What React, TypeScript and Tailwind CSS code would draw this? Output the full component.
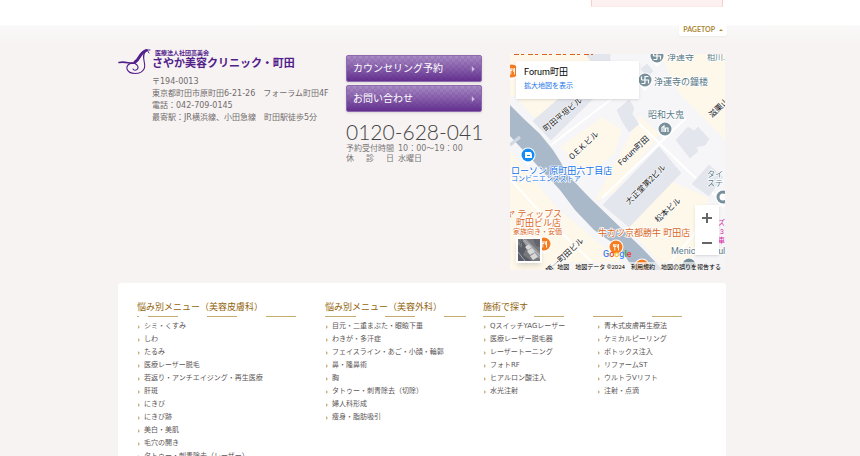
import React from 'react';

const dermatology = [
  'シミ・くすみ',
  'しわ',
  'たるみ',
  '医療レーザー脱毛',
  '若返り・アンチエイジング・再生医療',
  '肝斑',
  'にきび',
  'にきび跡',
  '美白・美肌',
  '毛穴の開き',
  'タトゥー・刺青除去（レーザー）',
];

const surgery = [
  '目元・二重まぶた・眼瞼下垂',
  'わきが・多汗症',
  'フェイスライン・あご・小顔・輪郭',
  '鼻・隆鼻術',
  '胸',
  'タトゥー・刺青除去（切除）',
  '婦人科形成',
  '痩身・脂肪吸引',
];

const treatmentsLeft = [
  'QスイッチYAGレーザー',
  '医療レーザー脱毛器',
  'レーザートーニング',
  'フォトRF',
  'ヒアルロン酸注入',
  '水光注射',
];

const treatmentsRight = [
  '青木式皮膚再生療法',
  'ケミカルピーリング',
  'ボトックス注入',
  'リファームST',
  'ウルトラVリフト',
  '注射・点滴',
];

const MenuList: React.FC<{ items: string[] }> = ({ items }) => (
  <ul className="pl-px text-[7px] leading-[13px] text-[#5c5656]">
    {items.map((item) => (
      <li key={item} className="flex items-center gap-1 whitespace-nowrap">
        <span className="h-0 w-0 border-y-[2px] border-l-[2px] border-y-transparent border-l-[#c9b583]" />
        <a href="#menu">{item}</a>
      </li>
    ))}
  </ul>
);

const MenuHeading: React.FC<{ title: string; dashes: string[] }> = ({ title, dashes }) => (
  <>
    <h2 className="text-[9px] leading-[18px] whitespace-nowrap text-[#93640c]">{title}</h2>
    <div className="mb-[3px] flex">
      {dashes.map((dash, i) => (
        <span key={i} className={`h-px shrink-0 bg-[#c4ab70] ${dash}`} />
      ))}
    </div>
  </>
);

const ContactButton: React.FC<{ label: string }> = ({ label }) => (
  <button
    type="button"
    className="relative flex h-[27px] w-full items-center justify-between overflow-hidden rounded-xs border border-[#8d69ad] bg-linear-to-b from-[#a98bc4] to-[#65308f] px-[6px] text-[10px] text-white shadow-sm"
  >
    <span className="absolute inset-0 bg-[repeating-conic-gradient(#4b1a7a_0_25%,transparent_0_50%)] bg-[length:6px_6px] opacity-10" />
    <span className="relative">{label}</span>
    <svg viewBox="0 0 5 6" className="relative h-[6px] w-[5px]">
      <path d="M0 3H3M2 0.5L4.5 3L2 5.5Z" fill="#d3bfe2" stroke="#d3bfe2" strokeWidth="0.3" />
    </svg>
  </button>
);

const LogoMark = () => (
  <svg viewBox="0 0 34 28" className="h-7 w-[34px] shrink-0" fill="none" stroke="#52208b" strokeLinecap="round">
    <path d="M1 14.500C8 13 11 16 16 15C22 13 21 5 29 2" strokeWidth="1.600" />
    <path d="M28 2.500C21 5 23 10 17 14" strokeWidth="2.800" />
    <path d="M28 3C22 8 29 16 26 21C23 27 11 27 9 21C8 16 15 13 19 17C22 21 17 24 15 21" strokeWidth="1.100" />
    <path d="M29 2L31 5M29 2L32 2" strokeWidth="1" />
  </svg>
);

const FoodPin: React.FC<{ x: number; y: number }> = ({ x, y }) => (
  <g transform={`translate(${x} ${y})`}>
    <path d="M0 10L-5 5H5Z" fill="#fff" />
    <circle r="7.500" fill="#fff" />
    <circle r="6.500" fill="#f57c20" />
    <path d="M-2.500 -3V-0.500H0V-3M-1.200 -3V3.500M2.500 3.500V-3C1.300 -2 1.300 0 1.500 0.500H2.500" fill="none" stroke="#fff" strokeWidth="0.9" />
  </g>
);

const PlacePin: React.FC<{ x: number; y: number; children?: React.ReactNode }> = ({ x, y, children }) => (
  <g transform={`translate(${x} ${y})`}>
    <path d="M0 11L-6 4H6Z" fill="#fff" />
    <circle r="7.500" fill="#fff" />
    <circle r="6.500" fill="#78909c" />
    {children}
  </g>
);

const Manji = () => (
  <path d="M0 3.500V-3.500H3.500M-3.500 0H3.500V3.500M-3.500 -3.500V0M0 3.500H-3.500" fill="none" stroke="#fff" strokeWidth="1.200" />
);

const MapDrawing = () => (
  <svg viewBox="0 0 215 216" preserveAspectRatio="xMidYMid slice" className="block h-full w-full">
    <rect width="215" height="216" fill="#f6f6f8" />

    {/* blocks */}
    <g fill="#fef8ea">
      <path d="M0 0H68L0 44Z" />
      <path d="M3 41L62 -4L95 10L38 68L26 66Z" />
      <path d="M50 93L92 63L112 76L104 100L78 120Z" />
      <path d="M84 148L130 62L150 80L104 138Z" />
      <path d="M150 0H215V86L168 38Z" />
      <path d="M0 97L48 155L122 216H0Z" />
      <path d="M118 173L160 127L199 144L180 216H155Z" />
    </g>
    <g stroke="#fff" strokeWidth="2" fill="none">
      <path d="M41 91L116 34M92 144L176 64M0 125L30 158L90 216M153 216L215 145" />
      <path d="M111 52L178 117L215 150" />
    </g>

    {/* buildings */}
    <g fill="#e3e6ed" stroke="#dce0e9" strokeWidth="0.5">
      <path d="M23 67L60 35L82 12L101 27L41 86Z" />
      <path d="M76 0H100V8L87 16Z" />
      <path d="M93 151L149 93L171 119L119 173Z" />
      <path d="M107 56L119 46L124 54L122 60L129 70L119 78L112 67Z" />
      <path d="M166 86L178 73L184 77L188 73L199 85L195 91L186 93L188 97L180 104Z" />
      <path d="M182 130L199 111L213 123L199 142Z" />
      <path d="M131 15L137 10L143 17L137 23Z" />
    </g>

    <path d="M0 51L15 66L30 80L43 96L50 107L58 121L75 139L84 148L110 173L132 194L153 216H124L110 194L84 176L65 156L50 136L25 109L0 82Z" fill="#aab9ca" />
    <path d="M0 91L10 83" stroke="#d1d9e3" strokeWidth="3" />

    <g fontSize="8" fill="#16181b" stroke="#fff" strokeWidth="1" paintOrder="stroke">
      <text transform="translate(36 78) rotate(-40)">町田平垣ビル</text>
      <text transform="translate(62 106) rotate(-43)">O.E.K.ビル</text>
      <text transform="translate(111 112) rotate(-43)">Forum町田</text>
      <text transform="translate(119 151) rotate(-45)">大正堂第2ビル</text>
      <text transform="translate(148 169) rotate(-43)">松本ビル</text>
      <text transform="translate(202 64) rotate(-43)">滋栗山</text>
      <text transform="translate(39 220) rotate(-43)">第一町田ビル</text>
    </g>

    <g fill="#5b7b89" stroke="#fff" strokeWidth="1.500" paintOrder="stroke" fontSize="9">
      <text x="157" y="6">浄運寺</text>
      <text x="197" y="6" fontSize="8">相川.</text>
      <text x="144" y="31">浄運寺の鐘楼</text>
      <text x="138" y="64">昭和大鬼</text>
      <text x="197" y="123" fontSize="8">タイ</text>
      <text x="197" y="132" fontSize="8">ステ</text>
      <text x="161" y="200">Menicon</text>
      <text x="203" y="200">oul</text>
    </g>
    <PlacePin x={147} y={2}><Manji /></PlacePin>
    <PlacePin x={135} y={26}><Manji /></PlacePin>
    <PlacePin x={155} y={75}>
      <path d="M-3 3V-1.500L-1 -3V3M0.500 3V-1H3V3" fill="none" stroke="#fff" strokeWidth="1.200" />
    </PlacePin>
    <PlacePin x={213} y={143}><circle r="3.500" fill="#fff" /></PlacePin>
    <PlacePin x={179} y={211} />

    <g fill="#1473e6" stroke="#fff" strokeWidth="1.500" paintOrder="stroke">
      <text x="1" y="120" fontSize="9">ローソン 原町田六丁目店</text>
      <text x="1" y="127" fontSize="7">コンビニエンスストア</text>
    </g>
    <path d="M18 112L12 105H24Z" fill="#fff" />
    <circle cx="18" cy="101" r="7.500" fill="#fff" />
    <circle cx="18" cy="101" r="6.500" fill="#138df5" />
    <path d="M15 98H21L22 100.500V104H15Z" fill="#fff" />
    <path d="M17 101.500H20" stroke="#138df5" strokeWidth="1" />

    <g fill="#d9661c" stroke="#fff" strokeWidth="1.500" paintOrder="stroke" fontSize="9">
      <text x="52" y="163" textAnchor="end">ヤ ティップス</text>
      <text x="51" y="172" textAnchor="end">町田ビル店</text>
      <text x="52" y="180" textAnchor="end" fontSize="7">家族向き・安価</text>
      <text x="88" y="182">牛カツ京都勝牛 町田店</text>
    </g>
    <FoodPin x={2} y={17} />
    <FoodPin x={34} y={190} />
    <FoodPin x={106} y={193} />
    <FoodPin x={132} y={212} />
    <path d="M4 0.500H83" stroke="#d9661c" strokeWidth="1.200" strokeDasharray="5 2 3 4" />
    <g fill="#dc2ea8" fontSize="7">
      <text x="208" y="171">ズ</text>
      <text x="210" y="180">3</text>
      <text x="208" y="189">車</text>
    </g>
  </svg>
);

const ClinicMap = () => (
  <div className="relative mr-px h-[216px] min-w-0 flex-1 overflow-hidden font-['Roboto','Noto_Sans_CJK_JP',sans-serif]">
    <MapDrawing />
    <div className="absolute top-[7px] left-[6px] h-[38px] w-[123px] bg-white px-2 pt-1 shadow">
      <p className="text-[9px] leading-[14px] whitespace-nowrap text-black">Forum町田</p>
      <a href="#map" className="block text-[7px] leading-[14px] text-[#1a73e8]">
        拡大地図を表示
      </a>
    </div>
    <button type="button" aria-label="航空写真" className="absolute bottom-[7px] left-[6px] border-2 border-white shadow-md">
      <svg viewBox="0 0 22 22" className="block h-[22px] w-[22px]">
        <rect width="22" height="22" fill="#77797d" />
        <path d="M0 4L8 0L22 14V20Z" fill="#9a9ca2" />
        <path d="M3 0L9 8L5 16L14 22H0V6L4 9Z" fill="#5a5d66" />
        <path d="M7 8L11 5L14 8L10 11ZM9 12L14 9L17 13L12 16ZM12 17L17 14L20 18L15 21Z" fill="#d7d8d8" />
        <path d="M1 1L4 3L2 7M15 0H22V8L18 7Z" fill="#62656d" />
        <path d="M5 0L12 7L22 17M0 13L7 22" fill="none" stroke="#b7b9bd" strokeWidth="0.8" />
      </svg>
    </button>
    <div className="absolute right-[6px] bottom-[15px] flex w-6 flex-col bg-white shadow">
      <button type="button" aria-label="拡大" className="flex h-[25px] items-center justify-center">
        <svg viewBox="0 0 12 12" className="h-3 w-3" stroke="#666" strokeWidth="2">
          <path d="M1 6H11M6 1V11" />
        </svg>
      </button>
      <button type="button" aria-label="縮小" className="flex h-[25px] items-center justify-center">
        <svg viewBox="0 0 12 12" className="h-3 w-3" stroke="#666" strokeWidth="2">
          <path d="M1 6H11" />
        </svg>
      </button>
    </div>
    <p className="absolute bottom-[10px] left-[93px] text-[9px] leading-[12px] font-medium">
      <span className="text-[#4285f4]">G</span>
      <span className="text-[#ea4335]">o</span>
      <span className="text-[#fbbc05]">o</span>
      <span className="text-[#4285f4]">g</span>
      <span className="text-[#34a853]">l</span>
      <span className="text-[#ea4335]">e</span>
    </p>
    <div className="absolute right-0 bottom-0 flex h-2 items-center gap-[6px] bg-[#f5f5f5]/70 px-1 text-[6px] whitespace-nowrap text-black">
      <span>地図</span>
      <span>地図データ ©2024</span>
      <a href="#terms">利用規約</a>
      <a href="#report">地図の誤りを報告する</a>
    </div>
  </div>
);

export default function App() {
  return (
    <div className="h-screen overflow-hidden bg-[linear-gradient(#fff_25px,#faf8f8_26px,#f7f3f3_45px)] pr-4 font-['DejaVu_Sans','Noto_Sans_CJK_JP',sans-serif]">
      <div className="mx-auto w-full max-w-[608px]">
        <div className="mr-[3px] ml-auto h-[7px] w-[132px] border-x border-b border-x-[#f8cfc6] border-b-[#fbe9e9] bg-[#fdf0f0]" />
        <div className="mt-4 flex justify-end">
          <a
            href="#top"
            className="-mr-px flex h-[13px] items-center gap-1 rounded-xs bg-white px-1 font-['Lato',sans-serif] text-[7px] font-bold text-[#ac8735] shadow-xs"
          >
            PAGETOP
            <span className="h-0 w-0 border-x-[2px] border-b-[2px] border-x-transparent border-b-[#ac8735]" />
          </a>
        </div>

        <div className="mt-[18px] flex">
          <div className="-mt-[6px] w-[228px] shrink-0">
            <div className="flex text-[#52208b]">
              <LogoMark />
              <h1 className="whitespace-nowrap">
                <span className="block pl-[3px] text-[6px] leading-[9px] font-bold">医療法人社団高美会</span>
                <span className="block text-[11px] leading-[13px] font-bold">さやか美容クリニック・町田</span>
              </h1>
            </div>
            <address className="pl-[34px] text-[8px] leading-[12px] whitespace-nowrap text-[#716b6b] not-italic">
              <p>〒194-0013</p>
              <p>東京都町田市原町田6-21-26　フォーラム町田4F</p>
              <p>電話：042-709-0145</p>
              <p>最寄駅：JR横浜線、小田急線　町田駅徒歩5分</p>
            </address>
          </div>

          <div className="mt-px mr-7 w-[136px] shrink-0">
            <div className="flex flex-col gap-[3px]">
              <ContactButton label="カウンセリング予約" />
              <ContactButton label="お問い合わせ" />
            </div>
            <p className="mt-2 font-['Lato',sans-serif] text-[21px] leading-6 font-light whitespace-nowrap text-[#444]">0120-628-041</p>
            <dl className="grid grid-cols-[48px_1fr] gap-x-1 text-[8px] leading-[10px] text-[#777]">
              <dt>予約受付時間</dt>
              <dd>10：00〜19：00</dd>
              <dt className="flex justify-between">
                <span>休</span>
                <span>診</span>
                <span>日</span>
              </dt>
              <dd>水曜日</dd>
            </dl>
          </div>

          <ClinicMap />
        </div>

        <div className="mt-[13px] flex rounded-[3px] bg-white pt-[15px] pb-6 pl-[19px]">
          <section className="w-[188px] shrink-0">
            <MenuHeading
              title="悩み別メニュー（美容皮膚科）"
              dashes={['mr-[9px] w-[2px]', 'mr-[29px] w-[30px]', 'mr-[29px] w-[30px]', 'w-[30px]']}
            />
            <MenuList items={dermatology} />
          </section>
          <section className="w-[158px] shrink-0">
            <MenuHeading
              title="悩み別メニュー（美容外科）"
              dashes={['mr-[29px] w-[31px]', 'mr-[29px] w-[30px]', 'w-[22px]']}
            />
            <MenuList items={surgery} />
          </section>
          <section className="min-w-0 flex-1">
            <MenuHeading
              title="施術で探す"
              dashes={['mr-[29px] w-[22px]', 'mr-[29px] w-[30px]', 'mr-[29px] w-[30px]', 'w-[30px]']}
            />
            <div className="grid grid-cols-[114px_1fr]">
              <MenuList items={treatmentsLeft} />
              <MenuList items={treatmentsRight} />
            </div>
          </section>
        </div>
      </div>
    </div>
  );
}
